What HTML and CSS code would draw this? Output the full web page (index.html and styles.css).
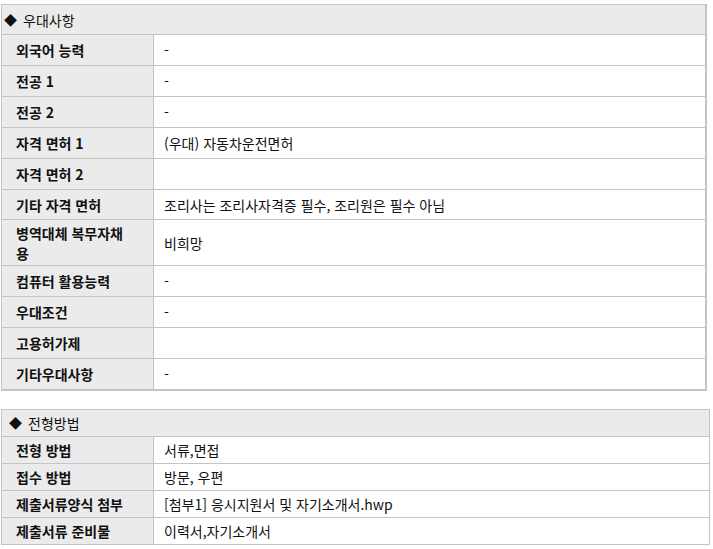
FILE: index.html
```html
<!DOCTYPE html>
<html lang="ko">
<head>
<meta charset="utf-8">
<title>우대사항 / 전형방법</title>
<link rel="stylesheet" href="styles.css">
</head>
<body>
<section class="box box-pref">
  <div class="hd hd-pref"><span class="dia">◆</span>우대사항</div>
  <div class="row"><div class="lbl">외국어 능력</div><div class="val">-</div></div>
  <div class="row"><div class="lbl">전공 1</div><div class="val">-</div></div>
  <div class="row"><div class="lbl">전공 2</div><div class="val">-</div></div>
  <div class="row"><div class="lbl">자격 면허 1</div><div class="val">(우대) 자동차운전면허</div></div>
  <div class="row"><div class="lbl">자격 면허 2</div><div class="val"></div></div>
  <div class="row row-short"><div class="lbl">기타 자격 면허</div><div class="val">조리사는 조리사자격증 필수, 조리원은 필수 아님</div></div>
  <div class="row row-tall"><div class="lbl">병역대체 복무자채용</div><div class="val">비희망</div></div>
  <div class="row"><div class="lbl">컴퓨터 활용능력</div><div class="val">-</div></div>
  <div class="row"><div class="lbl">우대조건</div><div class="val">-</div></div>
  <div class="row"><div class="lbl">고용허가제</div><div class="val"></div></div>
  <div class="row row-last"><div class="lbl">기타우대사항</div><div class="val">-</div></div>
</section>

<section class="box box-sel">
  <div class="hd hd-sel"><span class="dia">◆</span>전형방법</div>
  <div class="row row-sm"><div class="lbl">전형 방법</div><div class="val">서류,면접</div></div>
  <div class="row row-sm"><div class="lbl">접수 방법</div><div class="val">방문, 우편</div></div>
  <div class="row row-sm"><div class="lbl">제출서류양식 첨부</div><div class="val">[첨부1] 응시지원서 및 자기소개서.hwp</div></div>
  <div class="row row-sm row-last"><div class="lbl">제출서류 준비물</div><div class="val">이력서,자기소개서</div></div>
</section>
</body>
</html>
```

FILE: styles.css
```css
* { box-sizing: border-box; }

html, body {
  margin: 0;
  background: #ffffff;
}

body {
  padding: 4px 0 0 1px;
  font-family: "Noto Sans CJK KR", "Noto Sans", sans-serif;
  font-size: 14px;
  line-height: 20px;
  color: #111111;
}

.box {
  border: 1px solid #c4c4c4;
}

.box-pref {
  width: 706px;
  border-right-width: 2px;
  border-bottom-width: 2px;
}

.box-sel {
  width: 709px;
  margin-top: 18px;
}

.hd {
  display: flex;
  align-items: center;
  background: #ebebeb;
  border-bottom: 1px solid #c4c4c4;
  font-weight: 400;
}

.hd-pref {
  height: 30px;
  padding-left: 2px;
}

.hd-sel {
  height: 27px;
  padding-left: 7px;
}

.dia {
  font-size: 13px;
  margin-right: 6px;
}

.row {
  display: grid;
  grid-template-columns: 152px 1fr;
  height: 31px;
  border-bottom: 1px solid #c4c4c4;
}

.row-short {
  height: 30px;
}

.row-tall {
  height: 46px;
}

.row-sm {
  height: 27px;
}

.row-last {
  height: 30px;
  border-bottom: 0;
}

.row-sm.row-last {
  height: 26px;
}

.lbl {
  display: flex;
  align-items: center;
  background: #ebebeb;
  border-right: 1px solid #c4c4c4;
  padding: 0 20px 0 14px;
  font-weight: 700;
}

.val {
  display: flex;
  align-items: center;
  padding: 0 10px;
}
```
